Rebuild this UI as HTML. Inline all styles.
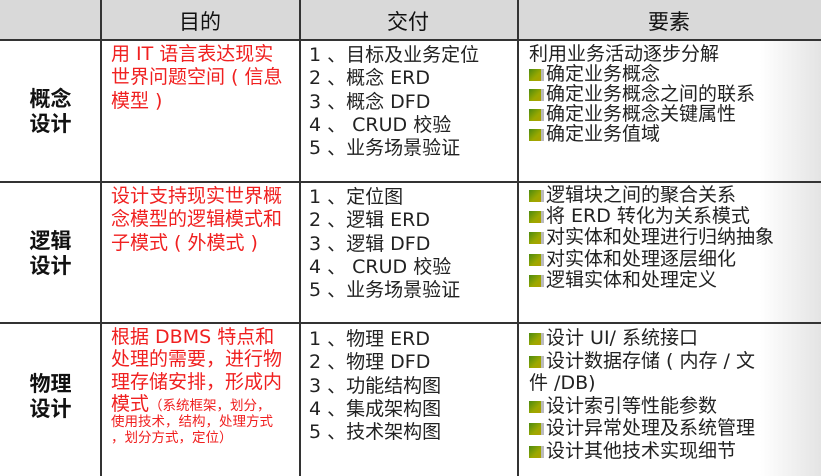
<!DOCTYPE html><html><head><meta charset="utf-8"><style>
*{margin:0;padding:0}
body{width:821px;height:476px;background:#fff;position:relative;overflow:hidden;font-family:"DejaVu Sans","Noto Sans CJK SC",sans-serif;}
.bgR{position:absolute;left:760px;top:0;width:61px;height:476px;background:linear-gradient(90deg,#fff,#e4e4e4)}
.hdr{position:absolute;left:0;top:0;width:821px;height:40px;background:#d9d9d9}
.v{position:absolute;top:0;width:2px;height:476px;background:#333}
.h{position:absolute;left:0;width:821px;height:2px;background:#333}
.t{position:absolute;font-size:19px;line-height:23.3px;white-space:nowrap;color:#222}
.hd{position:absolute;top:6px;font-size:21px;text-align:center;color:#111}
.lab{position:absolute;left:0;width:101px;text-align:center;font-size:21px;line-height:25px;font-weight:bold;color:#111}
.red{color:#f02020}
.b{display:inline-block;width:12px;height:12px;background:linear-gradient(135deg,#4a8a10,#9aa800 60%,#b0a000);border-right:3px solid #bbb;margin-right:2px;vertical-align:-1px}
</style></head><body>
<div class="bgR"></div>
<div class="hdr"></div>
<div class="hd" style="left:101px;width:198px">目的</div>
<div class="hd" style="left:299px;width:218px">交付</div>
<div class="hd" style="left:517px;width:304px">要素</div>
<div class="v" style="left:100px"></div><div class="v" style="left:299px"></div><div class="v" style="left:517px"></div>
<div class="h" style="top:39px"></div><div class="h" style="top:181px"></div><div class="h" style="top:322px"></div>

<div class="lab" style="top:87px">概念<br>设计</div>
<div class="lab" style="top:229px">逻辑<br>设计</div>
<div class="lab" style="top:372px">物理<br>设计</div>

<div class="t red" style="left:111px;top:43px">用 IT 语言表达现实<br>世界问题空间 ( 信息<br>模型 )</div>
<div class="t red" style="left:111px;top:185px">设计支持现实世界概<br>念模型的逻辑模式和<br>子模式 ( 外模式 )</div>
<div class="t red" style="left:111px;top:326px;line-height:22.3px">根据 DBMS 特点和<br>处理的需要，进行物<br>理存储安排，形成内<br>模式<span style="font-size:13.5px">（系统框架，划分，</span></div>
<div class="t red" style="left:111px;top:415px;font-size:13.5px;line-height:15.5px">使用技术，结构，处理方式<br>，划分方式，定位）</div>

<div class="t" style="left:309px;top:44px">1 、目标及业务定位<br>2 、概念 ERD<br>3 、概念 DFD<br>4 、 CRUD 校验<br>5 、业务场景验证</div>
<div class="t" style="left:309px;top:186px">1 、定位图<br>2 、逻辑 ERD<br>3 、逻辑 DFD<br>4 、 CRUD 校验<br>5 、业务场景验证</div>
<div class="t" style="left:309px;top:328px">1 、物理 ERD<br>2 、物理 DFD<br>3 、功能结构图<br>4 、集成架构图<br>5 、技术架构图</div>

<div class="t" style="left:529px;top:44px;line-height:20px">利用业务活动逐步分解<br><span class="b"></span>确定业务概念<br><span class="b"></span>确定业务概念之间的联系<br><span class="b"></span>确定业务概念关键属性<br><span class="b"></span>确定业务值域</div>
<div class="t" style="left:529px;top:185px;line-height:21.2px"><span class="b"></span>逻辑块之间的聚合关系<br><span class="b"></span>将 ERD 转化为关系模式<br><span class="b"></span>对实体和处理进行归纳抽象<br><span class="b"></span>对实体和处理逐层细化<br><span class="b"></span>逻辑实体和处理定义</div>
<div class="t" style="left:529px;top:327px;line-height:22.6px"><span class="b"></span>设计 UI/ 系统接口<br><span class="b"></span>设计数据存储 ( 内存 / 文<br>件 /DB)<br><span class="b"></span>设计索引等性能参数<br><span class="b"></span>设计异常处理及系统管理<br><span class="b"></span>设计其他技术实现细节</div>
</body></html>
